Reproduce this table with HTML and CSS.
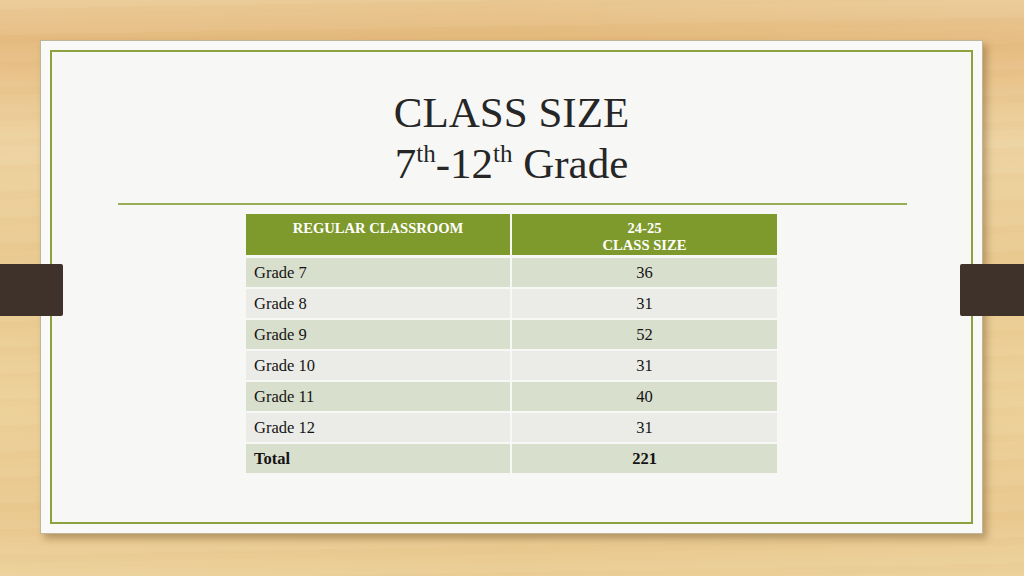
FILE: index.html
```html
<!DOCTYPE html>
<html lang="en">
<head>
<meta charset="utf-8">
<title>Class Size</title>
<link rel="stylesheet" href="styles.css">
</head>
<body>
<div class="wood">
  <div class="tab tab-left"></div>
  <div class="tab tab-right"></div>
  <div class="paper">
    <div class="frame">
      <div class="title">
        <div class="title-line">CLASS SIZE</div>
        <div class="title-line">7<span class="sup">th</span>-12<span class="sup">th</span> Grade</div>
      </div>
      <div class="rule"></div>
      <div class="table">
        <div class="cell head">REGULAR CLASSROOM</div>
        <div class="cell head">24-25<br>CLASS SIZE</div>

        <div class="cell odd label">Grade 7</div>
        <div class="cell odd num">36</div>
        <div class="cell even label">Grade 8</div>
        <div class="cell even num">31</div>
        <div class="cell odd label">Grade 9</div>
        <div class="cell odd num">52</div>
        <div class="cell even label">Grade 10</div>
        <div class="cell even num">31</div>
        <div class="cell odd label">Grade 11</div>
        <div class="cell odd num">40</div>
        <div class="cell even label">Grade 12</div>
        <div class="cell even num">31</div>
        <div class="cell odd label bold">Total</div>
        <div class="cell odd num bold">221</div>
      </div>
    </div>
  </div>
</div>
</body>
</html>
```

FILE: styles.css
```css
html, body {
  margin: 0;
  padding: 0;
}

body {
  width: 1024px;
  height: 576px;
  overflow: hidden;
  font-family: "Liberation Serif", "Times New Roman", serif;
}

.wood {
  position: relative;
  width: 1024px;
  height: 576px;
  box-sizing: border-box;
  padding: 40px 41px 0 40px;
  background:
    repeating-linear-gradient(179deg, rgba(255,255,255,0.025) 0 9px, rgba(180,120,50,0.025) 9px 17px, rgba(255,255,255,0) 17px 26px),
    linear-gradient(90deg, rgba(255,255,255,0.04), rgba(200,140,60,0.03) 50%, rgba(255,255,255,0.04)),
    linear-gradient(180deg, #ebcb96 0%, #e4b97c 7%, #e8c287 14%, #edd29f 25%, #e9c88c 45%, #eccf95 70%, #e9c78b 90%, #ecd098 100%);
}

.tab {
  position: absolute;
  top: 264px;
  height: 52px;
  background: #3e322a;
  z-index: 2;
}

.tab-left {
  left: 0;
  width: 63px;
  border-radius: 0 2px 2px 0;
}

.tab-right {
  right: 0;
  width: 64px;
  border-radius: 2px 0 0 2px;
}

.paper {
  position: relative;
  width: 943px;
  height: 494px;
  box-sizing: border-box;
  background: #f9f9f8;
  border: 1px solid #bfb59b;
  padding: 9px;
  box-shadow: 4px 5px 7px rgba(90, 60, 20, 0.35);
}

.frame {
  height: 100%;
  box-sizing: border-box;
  border: 2px solid #8ba23f;
  background: #f7f7f6;
  padding-top: 35px;
}

.title {
  text-align: center;
  color: #262626;
  font-size: 43px;
  line-height: 51px;
}

.title-line {
  height: 51px;
}

.sup {
  font-size: 25px;
  line-height: 0;
  vertical-align: 16px;
}

.rule {
  height: 1.5px;
  background: #98ad55;
  margin: 14px 64px 0 66px;
}

.table {
  width: 531px;
  margin: 9px 0 0 194px;
  display: grid;
  grid-template-columns: 264px 265px;
  grid-template-rows: 42px repeat(7, 29px);
  column-gap: 2px;
  row-gap: 2px;
}

.cell {
  font-size: 16.5px;
  line-height: 29px;
  color: #141414;
}

.head {
  background: #7f9a2c;
  color: #ffffff;
  font-weight: bold;
  font-size: 14.6px;
  line-height: 17px;
  text-align: center;
  padding-top: 6px;
  box-sizing: border-box;
  margin-bottom: 1px;
}

.odd {
  background: #d9dfcd;
}

.even {
  background: #ebece7;
}

.label {
  padding-left: 8px;
}

.num {
  text-align: center;
}

.bold {
  font-weight: bold;
}
```
